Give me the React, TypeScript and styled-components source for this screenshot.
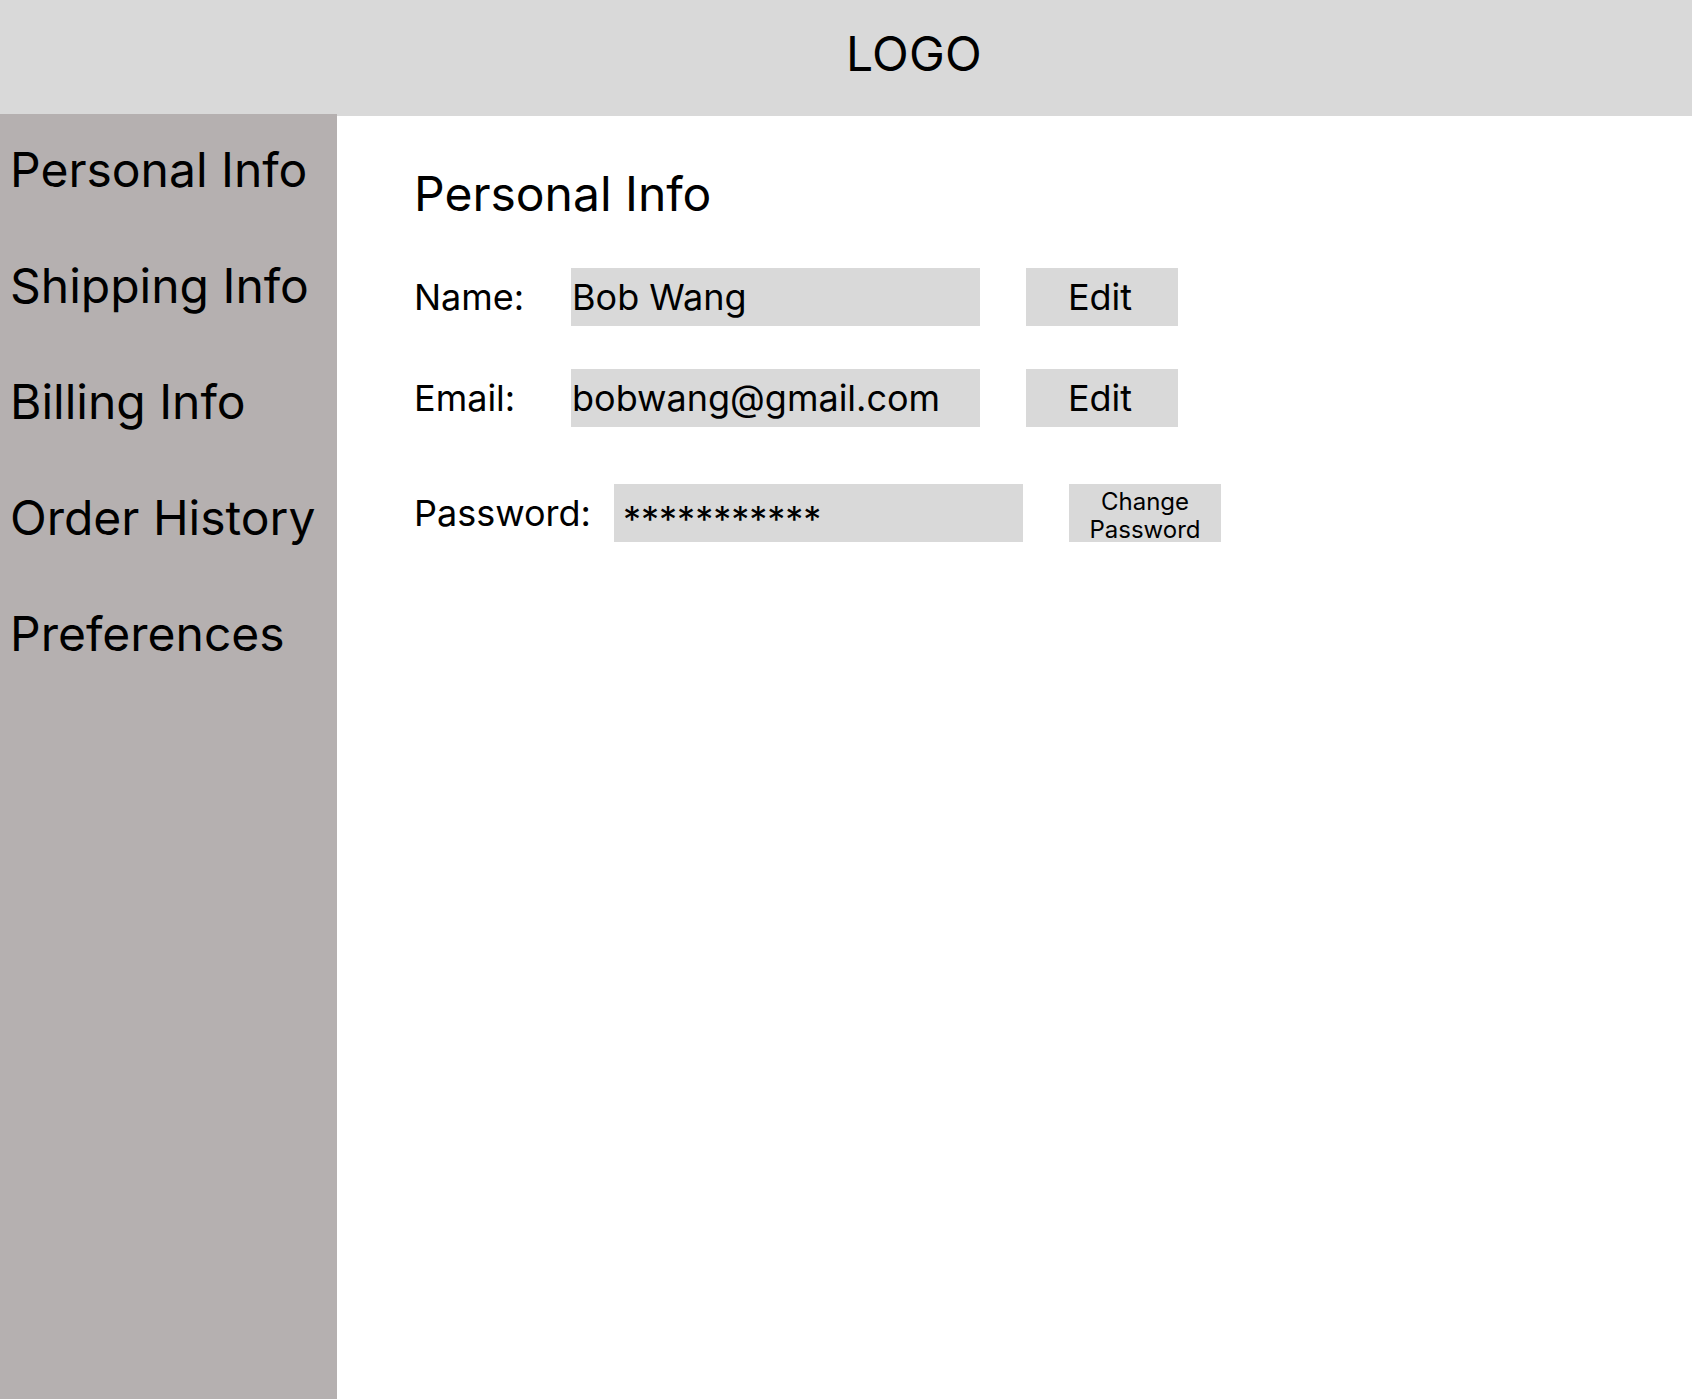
import React from "react";
import styled, { createGlobalStyle } from "styled-components";

const GlobalStyle = createGlobalStyle`
  html, body {
    margin: 0;
    padding: 0;
    background: #ffffff;
  }
  body {
    font-family: Inter, "Noto Sans", "Liberation Sans", sans-serif;
    color: #000000;
  }
  * { box-sizing: border-box; }
`;

const Page = styled.div`
  display: flex;
  flex-direction: column;
  min-height: 100vh;
  width: 100%;
`;

const Header = styled.header`
  height: 116px;
  flex: 0 0 116px;
  background: #d9d9d9;
  padding: 25px 0 0 50%;
`;

const Logo = styled.div`
  font-size: 48px;
  line-height: 58px;
  font-weight: 400;
  letter-spacing: 0.2px;
`;

const Body = styled.div`
  flex: 1;
  display: flex;
`;

const Sidebar = styled.nav`
  position: relative;
  width: 337px;
  flex: 0 0 337px;
  margin-top: -2px;
  background: #b5b0b0;
  padding: 27px 0 0 10px;
  display: flex;
  flex-direction: column;
  gap: 58px;
`;

const NavItem = styled.div`
  font-size: 48px;
  line-height: 58px;
  font-weight: 400;
  white-space: nowrap;
`;

const Content = styled.main`
  flex: 1;
  padding: 49px 0 0 77px;
  display: flex;
  flex-direction: column;
`;

const Title = styled.h1`
  margin: 0 0 45px 0;
  font-size: 48px;
  line-height: 58px;
  font-weight: 400;
`;

const Row = styled.div<{ $gapAfter: number }>`
  display: flex;
  align-items: center;
  margin-bottom: ${(p) => p.$gapAfter}px;
`;

const Label = styled.div<{ $width: number }>`
  width: ${(p) => p.$width}px;
  flex: 0 0 ${(p) => p.$width}px;
  font-size: 36px;
  line-height: 58px;
`;

const Field = styled.div<{ $masked?: boolean }>`
  width: 409px;
  height: 58px;
  flex: 0 0 409px;
  background: #d9d9d9;
  display: flex;
  align-items: center;
  padding: ${(p) => (p.$masked ? "12px 0 0 9px" : "0 0 0 1px")};
  font-size: 36px;
  white-space: nowrap;
  overflow: hidden;
`;

const Button = styled.button<{ $small?: boolean }>`
  width: 152px;
  height: 58px;
  flex: 0 0 152px;
  margin-left: 46px;
  border: none;
  border-radius: 0;
  background: #d9d9d9;
  color: #000;
  font-family: inherit;
  font-size: ${(p) => (p.$small ? "24px" : "36px")};
  line-height: ${(p) => (p.$small ? "28px" : "58px")};
  padding: ${(p) => (p.$small ? "2px 0 0 0" : "0 4px 0 0")};
  display: flex;
  align-items: ${(p) => (p.$small ? "flex-start" : "center")};
  justify-content: center;
  text-align: center;
  cursor: pointer;
`;

const ButtonText = styled.span`
  display: block;
  padding-top: 2px;
`;

const navItems = ["Personal Info", "Shipping Info", "Billing Info", "Order History", "Preferences"];

export default function App() {
  return (
    <>
      <GlobalStyle />
      <Page>
        <Header>
          <Logo>LOGO</Logo>
        </Header>
        <Body>
          <Sidebar>
            {navItems.map((n) => (
              <NavItem key={n}>{n}</NavItem>
            ))}
          </Sidebar>
          <Content>
            <Title>Personal Info</Title>
            <Row $gapAfter={43}>
              <Label $width={157}>Name:</Label>
              <Field>Bob Wang</Field>
              <Button>Edit</Button>
            </Row>
            <Row $gapAfter={57}>
              <Label $width={157}>Email:</Label>
              <Field>bobwang@gmail.com</Field>
              <Button>Edit</Button>
            </Row>
            <Row $gapAfter={0}>
              <Label $width={200}>Password:</Label>
              <Field $masked>***********</Field>
              <Button $small>
                <ButtonText>
                  Change
                  <br />
                  Password
                </ButtonText>
              </Button>
            </Row>
          </Content>
        </Body>
      </Page>
    </>
  );
}
